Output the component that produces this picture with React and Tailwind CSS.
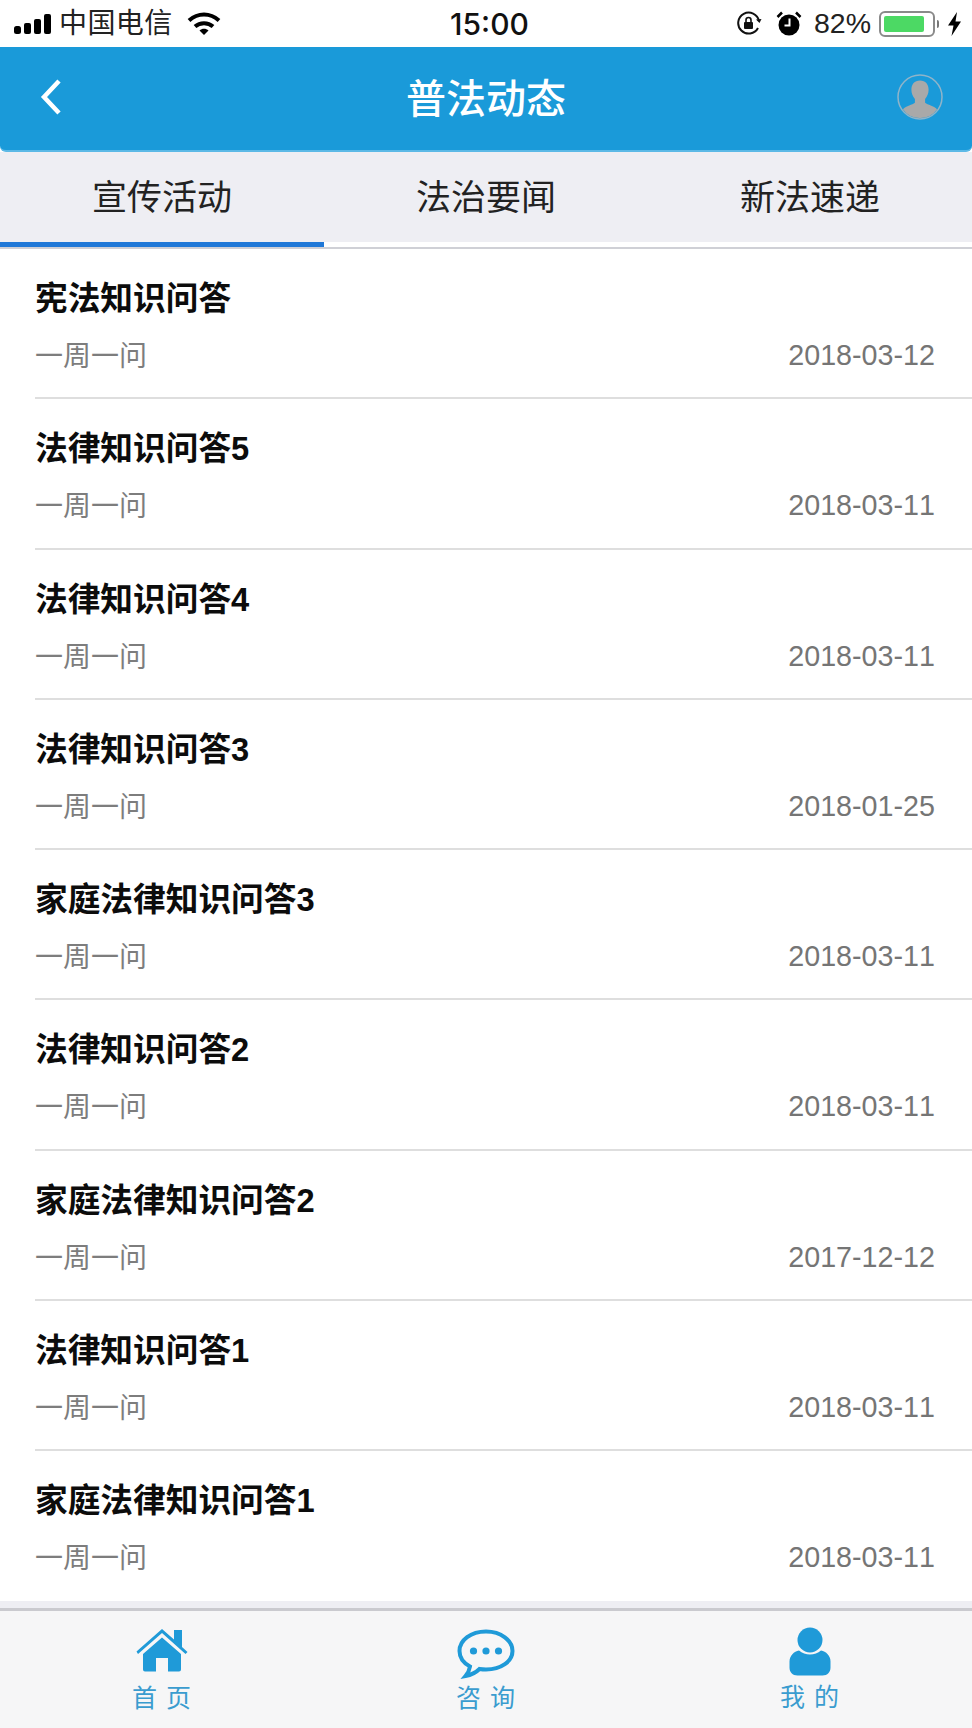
import React from "react";

const font = "font-['Liberation_Sans','Noto_Sans_CJK_SC',sans-serif]";

const items = [
  { title: "宪法知识问答", date: "2018-03-12" },
  { title: "法律知识问答5", date: "2018-03-11" },
  { title: "法律知识问答4", date: "2018-03-11" },
  { title: "法律知识问答3", date: "2018-01-25" },
  { title: "家庭法律知识问答3", date: "2018-03-11" },
  { title: "法律知识问答2", date: "2018-03-11" },
  { title: "家庭法律知识问答2", date: "2017-12-12" },
  { title: "法律知识问答1", date: "2018-03-11" },
  { title: "家庭法律知识问答1", date: "2018-03-11" },
];

const StatusBar = () => (
  <div className="h-[47px] bg-white flex items-center justify-between relative pl-[14px] pr-[10px]">
    <div className="flex items-center">
      <svg width="38" height="22" viewBox="0 0 38 22" fill="#000">
        <rect x="0" y="13" width="7" height="8" rx="2.5" />
        <rect x="10" y="10" width="7" height="11" rx="2" />
        <rect x="20" y="6" width="7" height="15" rx="2" />
        <rect x="30" y="1" width="7" height="20" rx="2" />
      </svg>
      <span className="ml-[7px] text-[28px] tracking-[0.4px] leading-none text-[#222]">中国电信</span>
      <svg className="ml-[14px]" width="34" height="24" viewBox="0 0 34 24" fill="none" stroke="#000" strokeWidth="4">
        <path d="M2 8.5C11 0.5 23 0.5 32 8.5" />
        <path d="M8 14.5C13 10 21 10 26 14.5" />
        <path d="M12.5 18.5L17 23L21.5 18.5C19 16.3 15 16.3 12.5 18.5Z" fill="#000" stroke="none" />
      </svg>
    </div>
    <span className="absolute left-0 right-0 pl-[7px] text-center text-[30px] leading-none text-[#111] font-medium font-['Inter',sans-serif]">
      15:00
    </span>
    <div className="flex items-center relative">
      <svg width="26" height="26" viewBox="0 0 26 26" fill="none" stroke="#111" strokeWidth="2">
        <path d="M22 17A10.5 10.5 0 1 1 23 10" />
        <path d="M20 8.5L23.5 12L25.5 8" fill="#111" stroke="none" />
        <rect x="8" y="11" width="9" height="7" rx="1" fill="#111" stroke="none" />
        <path d="M10 11V9a2.5 2.5 0 0 1 5 0v2" strokeWidth="1.6" />
      </svg>
      <svg className="ml-[14px]" width="26" height="26" viewBox="0 0 26 26" fill="#000">
        <circle cx="13" cy="14" r="10.5" />
        <path d="M1.5 6L6 1.5M24.5 6L20 1.5" stroke="#000" strokeWidth="2.5" />
        <path d="M13.5 7.5V14.5H8.5" stroke="#fff" strokeWidth="2" fill="none" />
      </svg>
      <span className="ml-[12px] text-[28.5px] leading-none text-[#222]">82%</span>
      <div className="ml-[8px] w-[56px] h-[26px] rounded-[6px] border-2 border-[#8a8a8a] p-[3px]">
        <div className="h-full w-[40px] rounded-[2px] bg-[#4cd964]" />
      </div>
      <div className="ml-[2px] w-[2px] h-[8px] bg-[#777] rounded-r-sm" />
      <svg className="ml-[8px]" width="15" height="24" viewBox="0 0 15 24" fill="#000">
        <path d="M10 0L1 13.5H6.5L4.5 24L14 9.5H8.5Z" />
      </svg>
    </div>
  </div>
);

const Header = () => (
  <div className="h-[105px] bg-[#1a9ad9] flex items-center justify-between relative pl-[40px] pr-[29px] rounded-b-[6px] border-b-2 border-[#5cb9e6]">
    <svg className="-mt-[4px]" width="22" height="36" viewBox="0 0 22 36" fill="none" stroke="#fff" strokeWidth="4.5">
      <path d="M19 2L4 18L19 34" />
    </svg>
    <span className="absolute left-0 right-0 text-center text-white text-[40px] leading-none font-medium">普法动态</span>
    <svg className="-mt-[4px]" width="46" height="46" viewBox="0 0 46 46">
      <circle cx="23" cy="23" r="22" fill="#1a9ad9" stroke="#8fb4c9" strokeWidth="1.5" />
      <path
        d="M23 6.5c-5.600 0-8.600 3.900-8.600 9.200 0 3.600 1.400 7 3.500 9.200v3.800c-2.600 2.200-8.500 3-12 6.500A20.500 20.500 0 0 0 23 44a20.500 20.500 0 0 0 17.100-8.800c-3.500-3.500-9.400-4.300-12-6.500v-3.800c2.100-2.200 3.500-5.600 3.500-9.200 0-5.300-3-9.200-8.600-9.200z"
        fill="#a9a9a9"
      />
    </svg>
  </div>
);

const Tabs = () => (
  <div className="h-[97px] bg-[#eeeef3] relative">
    <div className="h-[90px] grid grid-cols-3">
      {["宣传活动", "法治要闻", "新法速递"].map((t) => (
        <div key={t} className="flex items-center justify-center text-[35px] leading-none text-[#222]">
          {t}
        </div>
      ))}
    </div>
    <div className="h-[7px] bg-white border-b-2 border-[#cfd0d6]">
      <div className="w-[324px] h-[5px] bg-[#1f78d8]" />
    </div>
  </div>
);

const Row = ({ title, date, last }) => (
  <div className="h-[150.25px] pl-[35px]">
    <div className={`h-full flex flex-col pt-[30px] ${last ? "" : "border-b-2 border-[#dedede]"}`}>
      <div className="text-[32.7px] leading-[40px] font-bold text-[#0c0c0c]">{title}</div>
      <div className="flex justify-between items-start mt-[21px] pr-[37px]">
        <span className="text-[28px] leading-[34px] text-[#7d7d7d]">一周一问</span>
        <span className="text-[28.7px] leading-[30px] text-[#757575] [font-kerning:none]">{date}</span>
      </div>
    </div>
  </div>
);

const BottomNav = () => (
  <div className="flex-1 flex flex-col">
    <div className="h-[7px] bg-[#eeeef3] shrink-0" />
    <div className="h-[3px] bg-[#cacacf] shrink-0" />
    <div className="flex-1 bg-[#f6f6f7] grid grid-cols-3">
      <div className="flex flex-col items-center">
        <svg className="mt-[18px]" width="52" height="43" viewBox="0 0 52 43" fill="#1f9ad8">
          <path d="M26 4L2 25l-1.500-2.500L26 0l12 10.500V1h8v17l5.500 5-2 2z" />
          <path d="M26 8.500L7 25v15.500a2 2 0 0 0 2 2h11V29h12v13.500h11a2 2 0 0 0 2-2V25z" />
        </svg>
        <span className="mt-[12px] text-[25px] leading-[28px] text-[#3a9ccf] tracking-[1px]">首 页</span>
      </div>
      <div className="flex flex-col items-center">
        <svg className="mt-[18px]" width="58" height="50" viewBox="0 0 58 50" fill="none">
          <path
            d="M29 2.500C14 2.500 2.500 11 2.500 22c0 6.500 4 12 10.500 15.500-.5 3.500-2 6.500-4.500 9.500 5.500-1 10.500-3.500 14-7 2 .3 4 .5 6.500.5 15 0 26.500-8 26.500-18.500S44 2.500 29 2.500z"
            stroke="#1f9ad8"
            strokeWidth="4"
          />
          <circle cx="16.500" cy="22" r="3.600" fill="#1f9ad8" />
          <circle cx="29" cy="22" r="3.600" fill="#1f9ad8" />
          <circle cx="41.500" cy="22" r="3.600" fill="#1f9ad8" />
        </svg>
        <span className="mt-[5px] text-[25px] leading-[28px] text-[#3a9ccf] tracking-[1px]">咨 询</span>
      </div>
      <div className="flex flex-col items-center">
        <svg className="mt-[16px]" width="42" height="49" viewBox="0 0 42 49" fill="#1f9ad8">
          <circle cx="21" cy="13" r="12.500" />
          <path d="M10 23.500c3 2.500 7 4 11 4s8-1.500 11-4c5 1 9.500 5 9.500 11v6c0 4.500-3 8-8 8h-25c-5 0-8-3.500-8-8v-6c0-6 4.500-10 9.500-11z" />
        </svg>
        <span className="mt-[7px] text-[25px] leading-[28px] text-[#3a9ccf] tracking-[1px]">我 的</span>
      </div>
    </div>
  </div>
);

const App = () => {
  return (
    <div className={`w-[972px] h-[1728px] flex flex-col bg-white overflow-hidden ${font}`}>
      <StatusBar />
      <Header />
      <Tabs />
      <div className="shrink-0">
        {items.map((item, i) => (
          <Row key={i} title={item.title} date={item.date} last={i === items.length - 1} />
        ))}
      </div>
      <BottomNav />
    </div>
  );
};

export default App;
